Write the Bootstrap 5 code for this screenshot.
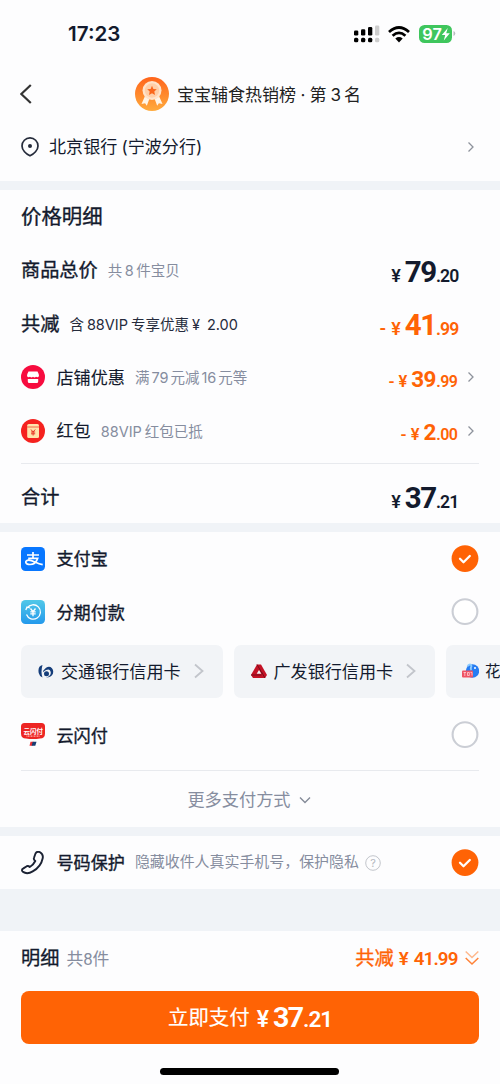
<!DOCTYPE html>
<html lang="zh-CN">
<head>
<meta charset="utf-8">
<meta name="viewport" content="width=device-width, initial-scale=1">
<title>确认付款</title>
<link href="https://cdn.jsdelivr.net/npm/bootstrap@5.3.0/dist/css/bootstrap.min.css" rel="stylesheet">
<style>
:root{--ink:#131a2d;--mute:#868d9f;--hot:#ff6305;--band:#f0f3f7}
body{width:500px;height:1084px;overflow:hidden;background:#fdfdfe;color:var(--ink);font-family:Inter,"Noto Sans CJK SC",sans-serif;font-size:17px;line-height:1.2}
svg{display:block;flex:none}
section,footer,header{padding:0 21.5px 0 21px}
.line{display:flex;align-items:center;white-space:nowrap}
.line>span,.chip>span{padding-top:1.5px}
.h53{height:53.5px}
.band{background:var(--band);height:9px}
.med{-webkit-text-stroke:.35px currentColor}
.t20{font-size:20.4px}.t19{font-size:19.2px}.t17{font-size:17.1px}
.hint{font-size:14.5px;color:var(--mute);margin-left:10px}
.sum{font-family:Roboto,sans-serif;font-weight:700;display:flex;align-items:baseline;margin-left:auto;margin-right:21px;line-height:1;padding-top:4px}
.sum i{font-style:normal;font-size:18px;font-weight:600}
.sum b{font-size:29.5px;font-weight:700;letter-spacing:-1.6px;margin-left:4px}
.sum small{font-size:17.6px;letter-spacing:-.9px;margin-right:-.9px;font-weight:600;margin-left:.5px}
.sum.sub i{font-size:16.5px}.sum.sub b{font-size:22.5px;letter-spacing:-.7px;margin-left:4px}.sum.sub small{font-size:16px;letter-spacing:-.5px;margin-right:0}
.sum.chev{margin-right:9px;padding-top:3px}
.hot{color:var(--hot)}
.rule{height:1px;background:#e8eaee}
.ico{width:24px;height:24px;margin-right:11.5px}
.chips{display:flex;gap:11px;height:53.5px}
.chip{flex:none;width:201.5px;border-radius:7px;background:#f2f4f7;display:flex;align-items:center;padding-left:17px;white-space:nowrap}
.chip svg:first-child{margin-right:7px}
.chip svg:last-child{margin-left:13px}
.chip.edge{width:54px;border-radius:7px 0 0 7px;padding-left:16px}
.chip.edge svg:first-child{margin:0 6px 0 0}
.pay{height:53px;border-radius:8px;background:var(--hot);color:#fff}
.pay .sum{margin:0 0 0 7px;padding-top:1px}
.homebar{width:179px;height:7px;border-radius:4px;background:#000;margin:24px auto 0}
</style>
</head>
<body>
<svg width="0" height="0" class="position-absolute">
  <symbol id="chev" viewBox="0 0 8 12"><path d="M1.500 1.500 6 6l-4.500 4.500" fill="none" stroke="#8d929c" stroke-width="1.300"/></symbol>
  <symbol id="chev2" viewBox="0 0 10 16"><path d="M1 1.500 8.500 8 1 14.500" fill="none" stroke="#c2c5cb" stroke-width="1.800"/></symbol>
  <symbol id="on" viewBox="0 0 28 28"><circle cx="14" cy="13.600" r="13.400" fill="#ff6305"/><path d="m9 13.800 3.500 3.400 6.300-6.200" fill="none" stroke="#fff" stroke-width="2.300" stroke-linecap="round" stroke-linejoin="round"/></symbol>
  <symbol id="off" viewBox="0 0 28 28"><circle cx="14" cy="13.600" r="12.400" fill="#fff" stroke="#cbced5" stroke-width="2.100"/></symbol>
</svg>

<header>
  <div class="line" style="height:68px">
    <span style="font-size:20.600px;font-weight:600;margin-left:47px">17:23</span>
    <div class="d-flex align-items-center ms-auto" style="margin-right:22.500px">
      <svg width="27" height="18" viewBox="0 0 27 18"><g><rect x="1" y="5.500" width="4.300" height="5" rx="1.300"/><rect x="8" y="4.200" width="4.300" height="6.300" rx="1.300"/><rect x="15" y="2" width="4.300" height="8.500" rx="1.300"/><rect x="1" y="12.800" width="4.300" height="4.500" rx="1.500"/><rect x="8" y="12.800" width="4.300" height="4.500" rx="1.500"/><rect x="15" y="12.800" width="4.300" height="4.500" rx="1.500"/></g><g fill="#cdcdcd"><rect x="22" y=".5" width="4.300" height="10" rx="1.300"/><rect x="22" y="12.800" width="4.300" height="4.500" rx="1.500"/></g></svg>
      <svg width="22" height="17" viewBox="0 0 22 17" style="margin-left:8px"><g fill="none" stroke="#000" stroke-width="2.800"><path d="M1 6Q11-3 21 6"/><path d="M4.600 9.800Q11 4 17.400 9.800"/></g><path d="M7.300 12.500Q11 9.600 14.700 12.500L11 16.500Z"/></svg>
      <svg width="37" height="18" viewBox="0 0 37 18" style="margin-left:9px"><rect width="33" height="18" rx="5.500" fill="#3fc65d"/><path d="M34.500 6v5q1.800-.8 1.800-2.500T34.500 6Z" fill="#b9bcc0"/><text x="3.300" y="14.500" font-size="15.800" font-weight="600" fill="#fff" textLength="19.500" lengthAdjust="spacingAndGlyphs">97</text><path d="m28.800 3-6 7h3.400l-1.400 5.500 6-7.200h-3.600Z" fill="#fff"/></svg>
    </div>
  </div>
  <div class="line" style="height:52px">
    <svg width="12" height="20" viewBox="0 0 12 20" style="margin-left:-1px"><path d="M10.800 1 1.300 10l9.500 9" fill="none" stroke="#333" stroke-width="2.200"/></svg>
    <svg width="34" height="34" viewBox="0 0 34 34" style="margin-left:103px"><defs><linearGradient id="mg" x2="0" y2="1"><stop stop-color="#ff641b"/><stop offset="1" stop-color="#ffab3d"/></linearGradient></defs><circle cx="17" cy="17" r="17" fill="url(#mg)"/><path d="m10 19-3.500 8 3.600-.8 1.700 2.600 3-8ZM24 19l3.500 8-3.600-.8-1.700 2.600-3-8Z" fill="#fff4e6"/><circle cx="17" cy="13.500" r="9.500" fill="#ffe3ca"/><circle cx="17" cy="13.500" r="7.200" fill="#ffcfa8"/><path d="m17 8.800 1.400 3.100 3.400.4-2.500 2.300.7 3.400-3-1.700-3 1.700.7-3.400-2.500-2.300 3.400-.4Z" fill="#fa671c"/></svg>
    <span style="font-size:17px;color:#222;margin-left:8px">宝宝辅食热销榜<span style="margin:0 4px 0 4.500px">·</span>第<span style="margin:0 3px 0 4px">3</span>名</span>
  </div>
  <div class="line" style="height:61px;padding-bottom:8px">
    <svg width="18" height="20" viewBox="0 0 18 20"><path d="M9 18.800C5 17 1 13 1 8.900a8 8 0 0 1 16 0C17 13 13 17 9 18.800Z" fill="none" stroke="#252b3b" stroke-width="1.700"/><circle cx="9" cy="9" r="2" fill="#252b3b"/></svg>
    <span style="margin-left:10px;font-size:17.100px">北京银行<span style="margin-left:4px">(</span>宁波分行)</span>
    <svg width="8" height="12" class="ms-auto" style="margin-right:4px"><use href="#chev"/></svg>
  </div>
</header>
<div class="band"></div>

<section style="height:333px">
  <div class="line h53"><span class="t20 med">价格明细</span></div>
  <div class="line h53"><span class="t19 med">商品总价</span><span class="hint">共<span style="margin:0 2.500px">8</span>件宝贝</span><div class="sum"><i>¥</i><b>79</b><small>.20</small></div></div>
  <div class="line h53"><span class="t19 med">共减</span><span class="hint" style="color:#252b3c">含<span style="margin:0 3px">88VIP</span>专享优惠<span style="margin-left:3px">¥</span><span style="margin-left:7px">2.00</span></span><div class="sum hot"><i style="margin-right:5px">-</i><i>¥</i><b>41</b><small>.99</small></div></div>
  <div class="line h53">
    <svg class="ico" viewBox="0 0 24 24"><circle cx="12" cy="12" r="12" fill="#f70c3f"/><path d="M7.500 6.500h9q1.500 2.500 1.500 4.500-1 2-3 .8-1.500 1.200-3 0-1.500 1.200-3 0-2 1.200-3-.8 0-2 1.500-4.500ZM6.800 14h10.400v2.500q0 1.500-1.500 1.500H8.300q-1.500 0-1.500-1.500Z" fill="#fff"/></svg>
    <span class="t17 med" style="-webkit-text-stroke-width:.1px">店铺优惠</span><span class="hint">满<span style="margin:0 2px">79</span>元减<span style="margin:0 2px">16</span>元等</span>
    <div class="sum sub hot chev"><i style="margin-right:4px">-</i><i>¥</i><b>39</b><small>.99</small></div><svg width="8" height="12" style="margin-right:4px"><use href="#chev"/></svg>
  </div>
  <div class="line h53">
    <svg class="ico" viewBox="0 0 24 24"><circle cx="12" cy="12" r="12" fill="#f5221f"/><rect x="6.200" y="5" width="11.800" height="14" rx="1.500" fill="#ffe3ab"/><path d="M6.200 8h11.800" stroke="#ef5a3c" stroke-width=".9"/><path d="m10 10.500 2.100 2.500 2.100-2.500M10 13h4.200M10 14.800h4.200M12.100 13v3.500" fill="none" stroke="#e73526"/></svg>
    <span class="t17 med" style="-webkit-text-stroke-width:.1px">红包</span><span class="hint"><span style="margin-right:3px">88VIP</span>红包已抵</span>
    <div class="sum sub hot chev"><i style="margin-right:4px">-</i><i>¥</i><b>2</b><small>.00</small></div><svg width="8" height="12" style="margin-right:4px"><use href="#chev"/></svg>
  </div>
  <div style="height:5.500px"></div>
  <div class="rule"></div>
  <div class="line" style="height:66px"><span class="t19 med">合计</span><div class="sum"><i>¥</i><b>37</b><small>.21</small></div></div>
</section>
<div class="band"></div>

<section style="height:295px;overflow:hidden;padding-right:0">
  <div class="line h53 pe-3">
    <svg class="ico" viewBox="0 0 24 24"><rect width="24" height="24" rx="4.500" fill="#0877ff"/><g fill="none" stroke="#fff" stroke-width="1.700"><path d="M6 8h12M12 5v6.300M7.200 11.300h9.500c-1.200 4-4.500 6.200-7.700 6.200-5.200 0-5.500-4.300-1.300-4.300 4.300 0 7 3 14 4.500"/></g></svg>
    <span class="t17 med">支付宝</span><svg width="28" height="28" class="ms-auto" style="margin-right:5px"><use href="#on"/></svg>
  </div>
  <div class="line h53 pe-3">
    <svg class="ico" viewBox="0 0 24 24"><defs><linearGradient id="bg" x2="0" y2="1"><stop stop-color="#51c8e8"/><stop offset="1" stop-color="#2499ec"/></linearGradient></defs><rect width="24" height="24" rx="4.500" fill="url(#bg)"/><g fill="none" stroke="#fff" stroke-width="1.300"><path d="M5.500 14.500A7.200 7.200 0 1 0 6.200 8M4.800 10l1.200-3 3 1"/><path d="m9.500 8.500 2.500 3.200 2.500-3.200M9.300 11.800h5.400M9.300 13.800h5.400M12 11.800v4.400"/></g></svg>
    <span class="t17 med">分期付款</span><svg width="28" height="28" class="ms-auto" style="margin-right:5px"><use href="#off"/></svg>
  </div>
  <div class="chips" style="margin-top:5.500px">
    <div class="chip"><svg width="16" height="16" viewBox="0 0 16 16"><path d="M4.500 2Q-.5 3 .7 10 1.500 13.500 4.500 14.500 2.500 9 4.500 2Z" fill="#153d7a"/><path d="M5 8Q9 2.500 12.500 4 16 6 15 10.500 13.500 14.500 8 14.500q5-1.500 4.800-5Q12 5 8 7L5 9Z" fill="#153d7a"/><circle cx="8.500" cy="10.800" r="2.500" fill="#153d7a"/></svg><span class="t17">交通银行信用卡</span><svg width="10" height="16"><use href="#chev2"/></svg></div>
    <div class="chip"><svg width="16" height="16" viewBox="0 0 16 16"><path d="M6 1.500h4L16 12l-2 3H2L0 12Z" fill="#c41226"/><path d="m8 7 2.300 3.700H5.700Z" fill="#f2f4f7"/><path d="M6 1.500 11.500 11M0 12h10.500M14 15 10.500 9" stroke="#780b1a" stroke-width="1"/></svg><span class="t17">广发银行信用卡</span><svg width="10" height="16"><use href="#chev2"/></svg></div>
    <div class="chip edge"><svg width="17" height="16" viewBox="0 0 17 16"><circle cx="10.500" cy="8" r="6.700" fill="#267cf2"/><path d="M5.500 3q3-3 4 0-1.500 2.500 0 4" fill="none" stroke="#8ccbff" stroke-width="1.800"/><circle cx="13" cy="5" r="1" fill="#fff"/><rect y="7.500" width="11" height="7" rx="1" fill="#ef5365"/><path d="M1.500 9.500h2.500M2.800 9v4M5.500 9.500h1.800v3H5.500ZM8.500 9.500h1.500v3" fill="none" stroke="#ffd0d5" stroke-width=".8"/></svg><span style="font-size:15.500px">花</span></div>
  </div>
  <div class="line pe-3" style="height:74.500px">
    <svg class="ico" viewBox="0 0 24 24"><path d="M3.500 0h17Q24 0 24 3.500v7q0 5-5 5-7 1.200-14 0-5 0-5-5v-7Q0 0 3.500 0Z" fill="#ed2523"/><path d="m9.500 18.700h3l-1 4H8.500Z" fill="#e82d31"/><path d="M11.700 18.700h3.800l-1.200 4h-3.700Z" fill="#173d72"/><text x="2.400" y="10.500" font-size="6.800" font-weight="700" fill="#fff" textLength="19.500" lengthAdjust="spacingAndGlyphs">云闪付</text><path d="M5.500 13.200h13" stroke="#ffaaa5" stroke-width="1.300" stroke-dasharray="1 .5"/></svg>
    <span class="t17 med">云闪付</span><svg width="28" height="28" class="ms-auto" style="margin-right:5px"><use href="#off"/></svg>
  </div>
  <div class="rule" style="margin-right:21px;margin-top:-3px"></div>
  <div class="line justify-content-center" style="height:59px;padding-right:23px;color:var(--mute);font-size:17.200px">更多支付方式<svg width="12" height="8" viewBox="0 0 12 8" style="margin-left:8px"><path d="m1 1.500 5 5 5-5" fill="none" stroke="#858b99" stroke-width="1.400"/></svg></div>
</section>
<div class="band"></div>
<section class="line" style="height:53px">
  <svg class="ico" viewBox="0 0 24 24"><path d="M14.500 2.500Q16-.2 19 1.200q3.500 2 2.700 6-1.700 8.500-10 13.200-5.500 3.300-9.700.5-2.300-2 .4-3.500l3.400-2.200q1.500-.7 3 .8 3.500-2 5.500-6-2-1.500-1.300-3.200Z" fill="none" stroke="#1b2233" stroke-width="1.900" stroke-linejoin="round"/></svg>
  <span class="t17 med">号码保护</span><span class="hint" style="font-size:14.950px">隐藏收件人真实手机号，保护隐私</span>
  <svg width="16" height="16" viewBox="0 0 16 16" style="margin-left:6px"><circle cx="8" cy="8" r="7.300" fill="none" stroke="#c2c5cb"/><text x="8" y="12" text-anchor="middle" font-size="11" fill="#b4b8c0">?</text></svg>
  <svg width="28" height="28" class="ms-auto" style="margin-right:-.5px"><use href="#on"/></svg>
</section>
<div class="band" style="height:42px"></div>
<footer>
  <div class="line" style="height:60px;padding-bottom:6px"><span class="t19 med">明细</span><span style="font-size:16.800px;color:var(--mute);margin-left:7px;font-family:Roboto,'Noto Sans CJK SC',sans-serif">共8件</span>
    <div class="hot ms-auto d-flex align-items-center"><span class="t19 med" style="padding-top:1.500px">共减</span><span style="font-family:Roboto,sans-serif;font-weight:600;font-size:18.800px;margin-left:5px;padding-top:2px">¥<span style="margin-left:5px;letter-spacing:-.9px">41.99</span></span><svg width="14" height="16" viewBox="0 0 14 16" style="margin-left:7px"><g fill="none" stroke="#ff6305" stroke-width="1.500"><path d="m.7 1.500 6.300 6 6.300-6" opacity=".45"/><path d="m.7 8 6.300 6 6.300-6" opacity=".8"/></g></svg></div>
  </div>
  <div class="pay line justify-content-center"><span class="med" style="font-size:20.400px;-webkit-text-stroke-width:.2px">立即支付</span><div class="sum"><i style="font-size:23px">¥</i><b style="font-size:28.500px">37</b><small style="font-size:22.500px">.21</small></div></div>
  <div class="homebar"></div>
</footer>
<script src="https://cdn.jsdelivr.net/npm/bootstrap@5.3.0/dist/js/bootstrap.bundle.min.js"></script>
</body>
</html>
